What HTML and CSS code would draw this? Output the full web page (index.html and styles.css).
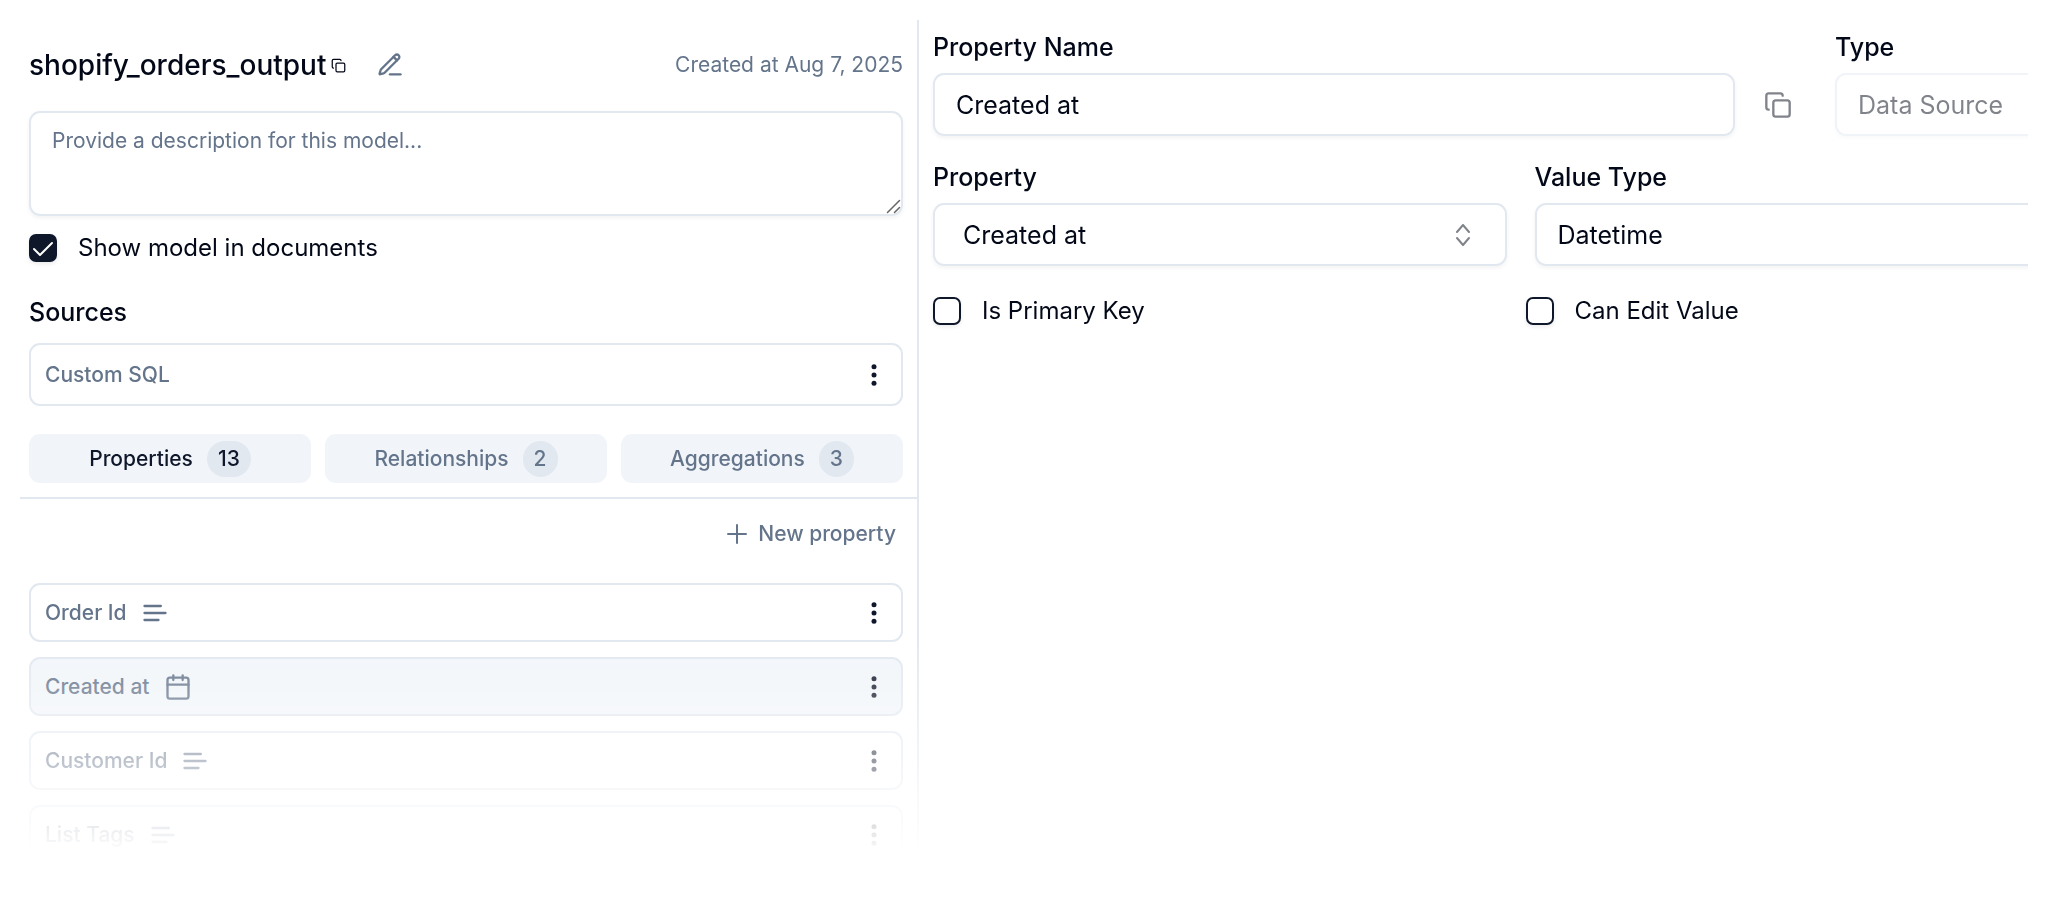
FILE: index.html
```
<!DOCTYPE html>
<html lang="en">
<head>
    <meta charset="UTF-8">
    <meta name="viewport" content="width=device-width, initial-scale=1">
    <title>shopify_orders_output</title>
    <link rel="stylesheet" href="styles.css">
</head>
<body>
    <!-- shared icons -->
    <svg class="sprite" aria-hidden="true">
        <symbol id="icon-copy" viewBox="0 0 24 24">
            <rect x="8" y="8" width="14" height="14" rx="2"/>
            <path d="M4 16c-1.1 0-2-.9-2-2V4c0-1.1.9-2 2-2h10c1.1 0 2 .9 2 2"/>
        </symbol>
        <symbol id="icon-text" viewBox="0 0 24 24">
            <path d="M17 6H3M21 12H3M15 18H3"/>
        </symbol>
        <symbol id="icon-calendar" viewBox="0 0 24 24">
            <rect x="3" y="4" width="18" height="18" rx="2"/>
            <path d="M8 2v4M16 2v4M3 10h18"/>
        </symbol>
        <symbol id="icon-dots" viewBox="0 0 28 28">
            <circle cx="14" cy="5.8" r="2.5"/>
            <circle cx="14" cy="14" r="2.5"/>
            <circle cx="14" cy="22.2" r="2.5"/>
        </symbol>
    </svg>

    <main class="workspace">
        <section class="model">
            <div class="model-info">
                <header class="model-header">
                    <h1>shopify_orders_output</h1>
                    <button class="icon-button copy-name" aria-label="Copy model name"><svg class="icon icon-small"><use href="#icon-copy"/></svg></button>
                    <button class="icon-button rename" aria-label="Rename model">
                        <svg class="icon" viewBox="0 0 24 24">
                            <path d="M12 20h9"/>
                            <path d="M16.4 3.6a2.1 2.1 0 0 1 3 3L7.4 18.6a2 2 0 0 1-.9.5l-2.8.8a.5.5 0 0 1-.6-.6l.8-2.8a2 2 0 0 1 .5-.9z"/>
                            <path d="M15 5l3 3"/>
                        </svg>
                    </button>
                    <span class="created">Created at Aug 7, 2025</span>
                </header>

                <div class="description">
                    <textarea aria-label="Description" placeholder="Provide a description for this model..."></textarea>
                    <svg class="grip" viewBox="0 0 16 16"><path d="M1.5 14.5l12-12M8.500 14.500l5-5"/></svg>
                </div>

                <label class="check">
                    <span class="box">
                        <input type="checkbox" checked>
                        <svg class="tick" viewBox="0 0 28 28"><path d="M5 15l6 6L23 9"/></svg>
                    </span>
                    Show model in documents
                </label>

                <h2>Sources</h2>
                <div class="row source">
                    <span>Custom SQL</span>
                    <button class="icon-button more" aria-label="Source options"><svg class="dots"><use href="#icon-dots"/></svg></button>
                </div>

                <nav class="tabs">
                    <button class="tab active">Properties <span class="count">13</span></button>
                    <button class="tab">Relationships <span class="count">2</span></button>
                    <button class="tab">Aggregations <span class="count">3</span></button>
                </nav>
            </div>

            <div class="properties">
                <button class="new-property">
                    <svg class="plus" viewBox="0 0 20 20"><path d="M10 1v18M1 10h18"/></svg>
                    New property
                </button>

                <div class="row">
                    <span>Order Id</span>
                    <svg class="icon"><use href="#icon-text"/></svg>
                    <button class="icon-button more" aria-label="Order Id options"><svg class="dots"><use href="#icon-dots"/></svg></button>
                </div>
                <div class="row selected">
                    <span>Created at</span>
                    <svg class="icon"><use href="#icon-calendar"/></svg>
                    <button class="icon-button more" aria-label="Created at options"><svg class="dots"><use href="#icon-dots"/></svg></button>
                </div>
                <div class="row">
                    <span>Customer Id</span>
                    <svg class="icon"><use href="#icon-text"/></svg>
                    <button class="icon-button more" aria-label="Customer Id options"><svg class="dots"><use href="#icon-dots"/></svg></button>
                </div>
                <div class="row">
                    <span>List Tags</span>
                    <svg class="icon"><use href="#icon-text"/></svg>
                    <button class="icon-button more" aria-label="List Tags options"><svg class="dots"><use href="#icon-dots"/></svg></button>
                </div>
            </div>
        </section>

        <section class="editor">
            <form class="form">
                <div class="name-row">
                    <div class="name-field">
                        <div class="field">
                            <label for="propertyName">Property Name</label>
                            <input class="control" id="propertyName" type="text" value="Created at">
                        </div>
                        <button class="icon-button copy-property" type="button" aria-label="Copy property name"><svg class="icon"><use href="#icon-copy"/></svg></button>
                    </div>
                    <div class="field">
                        <label for="type">Type</label>
                        <select class="control" id="type" disabled><option>Data Source</option></select>
                    </div>
                </div>

                <div class="value-row">
                    <div class="field">
                        <label for="property">Property</label>
                        <div class="select">
                            <select class="control combo" id="property"><option>Created at</option></select>
                            <svg class="chevrons" viewBox="0 0 28 28"><path d="M8 11l6-7 6 7M8 17l6 7 6-7"/></svg>
                        </div>
                    </div>
                    <div class="field">
                        <label for="valueType">Value Type</label>
                        <select class="control" id="valueType"><option>Datetime</option></select>
                    </div>
                </div>

                <div class="flags">
                    <label class="check"><span class="box"><input type="checkbox"></span>Is Primary Key</label>
                    <label class="check"><span class="box"><input type="checkbox"></span>Can Edit Value</label>
                </div>
            </form>
        </section>
    </main>
</body>
</html>
```
FILE: styles.css
```
* {
    box-sizing: border-box;
}

body {
    margin: 0;
    padding: 20px;
    background: #fff;
    color: #020817;
    font-family: Inter, "Liberation Sans", sans-serif;
    font-size: 25px;
    line-height: 32px;
}

h1, h2 {
    margin: 0;
    font-weight: 500;
}

button, input, select, textarea {
    font: inherit;
    color: inherit;
}

button {
    padding: 0;
    border: 0;
    background: none;
    cursor: pointer;
}

svg {
    display: block;
    fill: none;
    stroke: currentColor;
    stroke-width: 2;
    stroke-linecap: round;
    stroke-linejoin: round;
}

.sprite {
    display: none;
}

.icon, .dots {
    width: 28px;
    height: 28px;
    flex: none;
}

.icon-small {
    width: 15px;
    height: 15px;
}

.dots {
    fill: currentColor;
    stroke: none;
}

.icon-button {
    display: flex;
    align-items: center;
    justify-content: center;
}

/* the panels fade out towards the bottom */
.workspace {
    display: grid;
    grid-template-columns: 899fr 1109fr;
    overflow: hidden;
    -webkit-mask-image: linear-gradient(#000 73%, transparent 99%);
    mask-image: linear-gradient(#000 73%, transparent 99%);
}

/* left panel */
.model {
    min-width: 0;
    border-right: 2px solid #e2e8f0;
}

.model-info {
    padding: 21px 14px 14px 9px;
    border-bottom: 2px solid #e2e8f0;
}

.model-header {
    display: flex;
    align-items: center;
    height: 48px;
    margin-bottom: 22px;
}

h1 {
    font-size: 28px;
}

.copy-name {
    margin-left: 5px;
}

.rename {
    margin-left: 30px;
    color: #64748b;
}

.created {
    margin-left: auto;
    color: #64748b;
    font-size: 21px;
}

.description {
    position: relative;
    margin-bottom: 18px;
}

textarea {
    display: block;
    width: 100%;
    height: 105px;
    padding: 12px 21px;
    border: 2px solid #e2e8f0;
    border-radius: 11px;
    background: none;
    box-shadow: 0 2px 4px rgba(0, 0, 0, 0.05);
    font-size: 21px;
    resize: vertical;
}

textarea::placeholder {
    color: #64748b;
}

textarea::-webkit-resizer {
    display: none;
}

.grip {
    position: absolute;
    right: 1px;
    bottom: 2px;
    width: 16px;
    height: 16px;
    color: #666;
    stroke-width: 1.5;
    pointer-events: none;
}

.check {
    display: flex;
    align-items: center;
    gap: 21px;
    height: 28px;
    font-size: 24px;
}

.box {
    display: grid;
    flex: none;
}

.box input, .tick {
    grid-area: 1 / 1;
    width: 28px;
    height: 28px;
    margin: 0;
}

.box input {
    appearance: none;
    border: 2px solid #0f172a;
    border-radius: 7px;
    box-shadow: 0 2px 4px rgba(0, 0, 0, 0.08);
}

.box input:checked {
    background: #0f172a;
}

.tick {
    color: #fff;
    pointer-events: none;
}

h2 {
    margin: 34px 0 15px;
    font-size: 25px;
}

.row {
    display: flex;
    align-items: center;
    gap: 14px;
    height: 59px;
    padding: 0 13px 0 14px;
    border: 2px solid #e2e8f0;
    border-radius: 11px;
    color: #64748b;
    font-size: 21px;
    font-weight: 500;
}

.source {
    height: 63px;
}

.selected {
    background: #f1f5f9;
}

.more {
    margin-left: auto;
    color: #0f172a;
}

.tabs {
    display: grid;
    grid-template-columns: repeat(3, 1fr);
    gap: 14px;
    margin-top: 28px;
}

.tab {
    display: flex;
    align-items: center;
    justify-content: center;
    gap: 14px;
    height: 49px;
    border-radius: 11px;
    background: #f1f5f9;
    color: #64748b;
    font-size: 21px;
    font-weight: 500;
}

.tab.active {
    color: #0f172a;
}

.count {
    padding: 2px 11px;
    border-radius: 18px;
    background: #e2e8f0;
}

.properties {
    display: flex;
    flex-direction: column;
    gap: 15px;
    padding: 14px 14px 0 9px;
}

.new-property {
    display: flex;
    align-items: center;
    align-self: flex-end;
    gap: 11px;
    height: 42px;
    margin-bottom: 13px;
    padding-right: 7px;
    color: #64748b;
    font-size: 21px;
    font-weight: 500;
}

.plus {
    width: 20px;
    height: 20px;
}

/* right panel, the form runs past its right edge */
.editor {
    min-width: 0;
    padding: 11px 0 0 14px;
}

.form {
    display: flex;
    flex-direction: column;
    gap: 25px;
    width: calc(100% + 80px);
}

.name-row {
    display: grid;
    grid-template-columns: 874fr 273fr;
    gap: 28px;
}

.name-field {
    display: flex;
    align-items: flex-end;
    gap: 14px;
}

.value-row {
    display: grid;
    grid-template-columns: 1fr 1fr;
    gap: 28px;
}

.field {
    display: flex;
    flex: 1;
    flex-direction: column;
    gap: 10px;
}

.field label {
    font-weight: 500;
}

.control {
    width: 100%;
    height: 63px;
    padding: 0 21px;
    border: 2px solid #e2e8f0;
    border-radius: 11px;
    outline: none;
    background: none;
    box-shadow: 0 2px 4px rgba(0, 0, 0, 0.05);
    appearance: none;
}

.control:disabled {
    opacity: 0.5;
}

.combo {
    padding-left: 28px;
}

.select {
    display: grid;
    align-items: center;
}

.select .control, .chevrons {
    grid-area: 1 / 1;
}

.chevrons {
    justify-self: end;
    width: 28px;
    height: 28px;
    margin-right: 30px;
    opacity: 0.5;
    pointer-events: none;
}

.copy-property {
    width: 58px;
    height: 63px;
    opacity: 0.5;
}

.flags {
    display: grid;
    grid-template-columns: 1fr 1fr;
    gap: 10px;
    padding-top: 6px;
}
```
